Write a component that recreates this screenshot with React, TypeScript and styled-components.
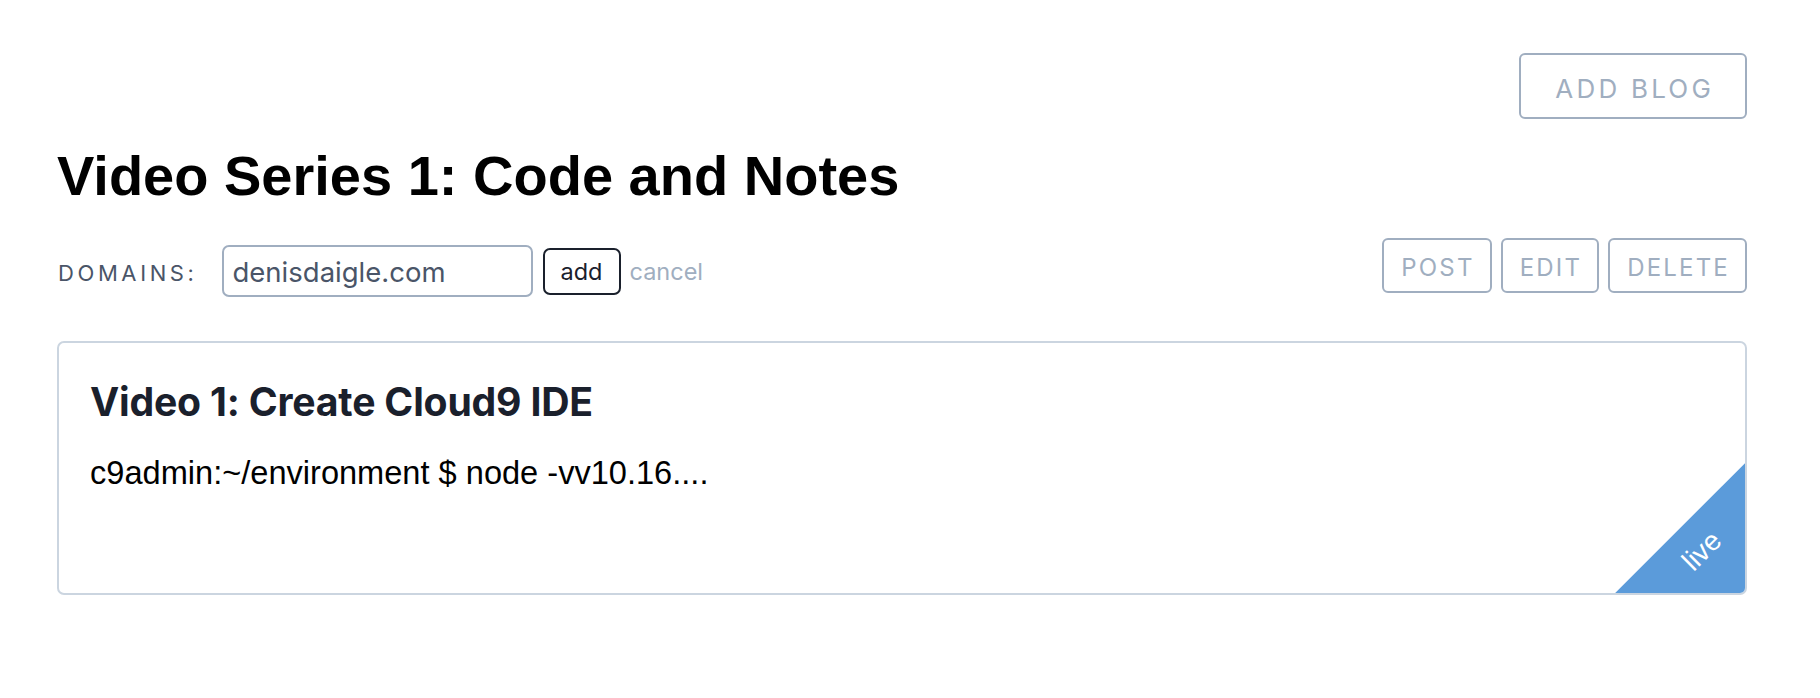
import React, { useEffect, useRef } from "react";
import styled, { createGlobalStyle } from "styled-components";

const GlobalStyle = createGlobalStyle`
  html, body { margin: 0; padding: 0; background: #ffffff; }
  body { font-family: Inter, "Noto Sans", sans-serif; color: #1a202c; }
  * { box-sizing: border-box; }
`;

const Page = styled.div`
  padding: 53px 73px 0 57px;
`;

const TopBar = styled.div`
  display: flex;
  justify-content: flex-end;
`;

const OutlineButton = styled.button<{ $size?: "lg" | "sm" }>`
  font-family: Inter, "Noto Sans", sans-serif;
  background: #fff;
  color: #a0aec0;
  border: 2px solid #a0aec0;
  border-radius: 6px;
  text-transform: uppercase;
  cursor: pointer;
  line-height: 1;
  font-weight: 400;
  ${(p) =>
    p.$size === "lg"
      ? `height: 66px; padding: 5px 31px 0 34px; font-size: 26px; letter-spacing: 3.2px;`
      : `height: 55px; padding: 4px 15px 0 17px; font-size: 24px; letter-spacing: 2.2px;`}
`;

const Title = styled.h1`
  margin: 23px 0 0;
  font-family: "Liberation Sans", Arial, sans-serif;
  font-weight: 700;
  font-size: 56px;
  line-height: 1.2;
  color: #000;
`;

const Toolbar = styled.div`
  display: flex;
  justify-content: space-between;
  align-items: flex-start;
  margin-top: 29px;
`;

const DomainGroup = styled.div`
  display: flex;
  align-items: center;
  margin-top: 7px;
  height: 52px;
`;

const Label = styled.span`
  font-size: 22px;
  letter-spacing: 3.6px;
  color: #4a5568;
  margin-left: 1px;
  margin-right: 24px;
  margin-top: 4px;
`;

const DomainInput = styled.input`
  width: 311px;
  height: 52px;
  border: 2px solid #a0aec0;
  border-radius: 7px;
  padding: 2px 9px 0;
  font-family: Inter, "Noto Sans", sans-serif;
  font-size: 27.5px;
  color: #4a5568;
  outline: none;
  caret-color: #1a202c;
`;

const AddButton = styled.button`
  margin-left: 10px;
  width: 78px;
  height: 47px;
  border: 2px solid #1a202c;
  border-radius: 7px;
  background: #fff;
  color: #1a202c;
  font-family: Inter, "Noto Sans", sans-serif;
  font-size: 23.5px;
  padding: 0;
  cursor: pointer;
`;

const CancelLink = styled.span`
  margin-left: 9px;
  font-size: 23.5px;
  color: #a0aec0;
  cursor: pointer;
`;

const Actions = styled.div`
  display: flex;
  gap: 9px;
`;

const Card = styled.div`
  position: relative;
  overflow: hidden;
  margin-top: 44px;
  border: 2px solid #cbd5e0;
  border-radius: 7px;
  padding: 32px 32px 0 31px;
  height: 254px;
`;

const CardTitle = styled.h2`
  margin: 0;
  font-family: Inter, "Noto Sans", sans-serif;
  font-weight: 700;
  font-size: 39.2px;
  line-height: 54px;
  color: #1a202c;
  letter-spacing: -0.2px;
`;

const CardBody = styled.p`
  margin: 20px 0 0;
  font-family: "Liberation Sans", Arial, sans-serif;
  font-size: 32.6px;
  line-height: 48px;
  color: #000;
`;

const Ribbon = styled.div`
  position: absolute;
  right: 0;
  bottom: 0;
  width: 130px;
  height: 130px;
  background: #5b9bda;
  clip-path: polygon(100% 0, 100% 100%, 0 100%);
`;

const RibbonText = styled.span`
  position: absolute;
  left: 87px;
  top: 88px;
  color: #fff;
  font-family: "Liberation Sans", Arial, sans-serif;
  font-size: 28px;
  line-height: 1;
  transform: translate(-50%, -50%) rotate(-45deg);
  transform-origin: center;
`;

export default function App() {
  const inputRef = useRef<HTMLInputElement>(null);
  useEffect(() => {
    const el = inputRef.current;
    if (el) {
      el.focus();
      const n = el.value.length;
      el.setSelectionRange(n, n);
    }
  }, []);
  return (
    <>
      <GlobalStyle />
      <Page>
        <TopBar>
          <OutlineButton $size="lg">Add Blog</OutlineButton>
        </TopBar>
        <Title>Video Series 1: Code and Notes</Title>
        <Toolbar>
          <DomainGroup>
            <Label>DOMAINS:</Label>
            <DomainInput ref={inputRef} defaultValue="denisdaigle.com" />
            <AddButton>add</AddButton>
            <CancelLink>cancel</CancelLink>
          </DomainGroup>
          <Actions>
            <OutlineButton>Post</OutlineButton>
            <OutlineButton>Edit</OutlineButton>
            <OutlineButton>Delete</OutlineButton>
          </Actions>
        </Toolbar>
        <Card>
          <CardTitle>Video 1: Create Cloud9 IDE</CardTitle>
          <CardBody>c9admin:~/environment $ node -vv10.16....</CardBody>
          <Ribbon>
            <RibbonText>live</RibbonText>
          </Ribbon>
        </Card>
      </Page>
    </>
  );
}
